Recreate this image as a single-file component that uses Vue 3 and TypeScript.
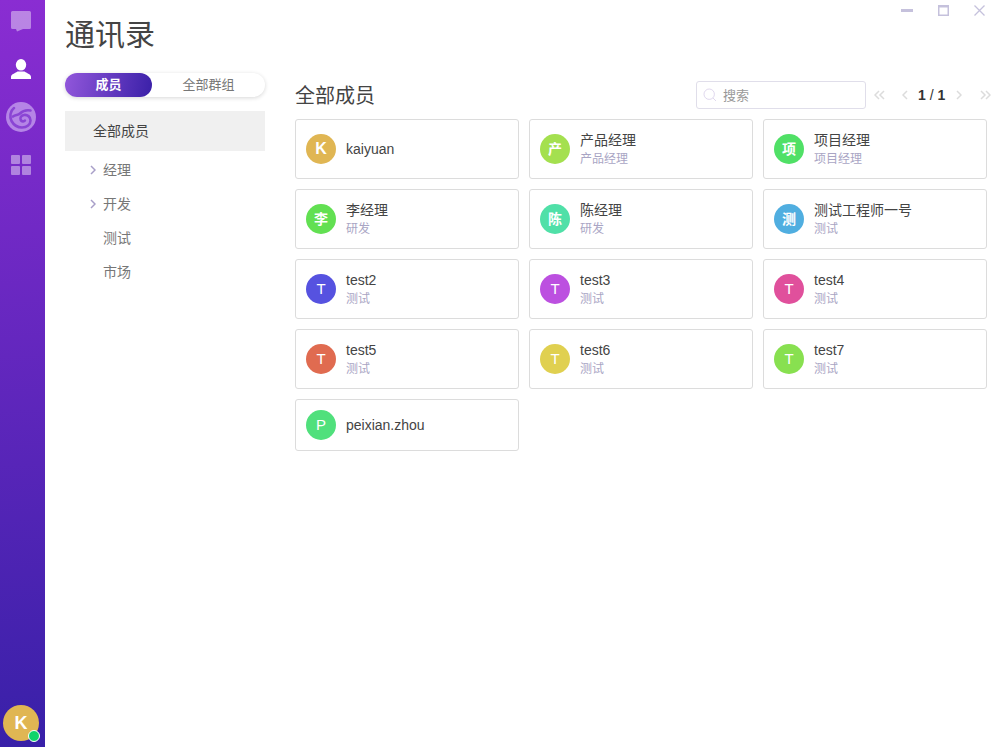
<script setup lang="ts">
interface Member { name: string; sub?: string; letter: string; color: string; strong?: boolean; big?: boolean }
const members: Member[] = [
  { name: 'kaiyuan', letter: 'K', color: '#e0b653', big: true },
  { name: '产品经理', sub: '产品经理', letter: '产', color: '#a4e04f', strong: true },
  { name: '项目经理', sub: '项目经理', letter: '项', color: '#50e066', strong: true },
  { name: '李经理', sub: '研发', letter: '李', color: '#62e052', strong: true },
  { name: '陈经理', sub: '研发', letter: '陈', color: '#50e0a8', strong: true },
  { name: '测试工程师一号', sub: '测试', letter: '测', color: '#50aee0', strong: true },
  { name: 'test2', sub: '测试', letter: 'T', color: '#5652e0' },
  { name: 'test3', sub: '测试', letter: 'T', color: '#bc50e0' },
  { name: 'test4', sub: '测试', letter: 'T', color: '#e0509c' },
  { name: 'test5', sub: '测试', letter: 'T', color: '#e06b50' },
  { name: 'test6', sub: '测试', letter: 'T', color: '#e0d050' },
  { name: 'test7', sub: '测试', letter: 'T', color: '#88e050' },
  { name: 'peixian.zhou', letter: 'P', color: '#50e07c' },
]
const tree = [
  { label: '经理', arrow: true },
  { label: '开发', arrow: true },
  { label: '测试', arrow: false },
  { label: '市场', arrow: false },
]
</script>

<template>
  <div class="app">
    <aside class="rail">
      <svg class="ico chat" width="20" height="21" viewBox="0 0 20 21">
        <path d="M1.500 0h17A1.500 1.500 0 0 1 20 1.500v15a1.500 1.500 0 0 1-1.500 1.500H12l-6 2.500L5 18H1.500A1.500 1.500 0 0 1 0 16.500v-15A1.500 1.500 0 0 1 1.500 0z" fill="#fff" fill-opacity=".42" />
      </svg>
      <svg class="ico user" width="20" height="20" viewBox="0 0 20 20">
        <ellipse cx="10" cy="5.800" rx="5.200" ry="5.800" fill="#fff" />
        <path d="M0 20v-2c0-2.600 3.600-3.600 6.500-5.500h7c2.900 1.900 6.500 2.900 6.500 5.500v2z" fill="#fff" />
      </svg>
      <svg class="ico logo" width="30" height="30" viewBox="0 0 30 30">
        <circle cx="15" cy="15" r="15" fill="#b585e6" />
        <path d="M8 6C4 9 3.500 15 5.500 19c2.500 4.500 6.500 6.500 10.500 6.500 5 0 8.500-3 8.500-7 0-3.800-3.200-6-6.500-5.500-3 .4-4.300 3-3.300 5 1 1.800 3.300 1.800 4.200.5" fill="none" stroke="#8a45d4" stroke-width="2.600" stroke-linecap="round" />
        <path d="M7 14.500c2.500-2 5-1 7-3 2.200-2.200 4.500-4 10.500-3" fill="none" stroke="#8a45d4" stroke-width="2.600" stroke-linecap="round" />
      </svg>
      <div class="apps"><i></i><i></i><i></i><i></i></div>
      <div class="spacer"></div>
      <div class="me">K<span class="dot"></span></div>
    </aside>

    <main class="main">
      <h1 class="title">通讯录</h1>
      <div class="cols">
        <section class="left">
          <div class="tabs">
            <div class="tab on">成员</div>
            <div class="tab">全部群组</div>
          </div>
          <div class="all">全部成员</div>
          <ul class="tree">
            <li v-for="t in tree" :key="t.label">
              <svg v-if="t.arrow" class="arrow" width="6" height="10" viewBox="0 0 6 10">
                <path d="M1 1l4 4-4 4" fill="none" stroke="#a89fc8" stroke-width="1.500" />
              </svg>
              <span>{{ t.label }}</span>
            </li>
          </ul>
        </section>

        <section class="right">
          <div class="head">
            <h2>全部成员</h2>
            <div class="search">
              <svg width="14" height="14" viewBox="0 0 14 14">
                <circle cx="6.200" cy="6.200" r="5.200" fill="none" stroke="#e0d8ee" stroke-width="1" />
                <path d="M10 10l3 3" stroke="#e0d8ee" stroke-width="1" />
              </svg>
              <span class="ph">搜索</span>
            </div>
            <div class="pager">
              <svg class="p1" width="11" height="10" viewBox="0 0 11 10"><path d="M5 1L1 5l4 4M10 1L6 5l4 4" fill="none" stroke="#dcdcdc" stroke-width="1.500" /></svg>
              <svg class="p2" width="6" height="10" viewBox="0 0 6 10"><path d="M5 1L1 5l4 4" fill="none" stroke="#dcdcdc" stroke-width="1.500" /></svg>
              <span class="num"><b>1</b> / <b>1</b></span>
              <svg class="p3" width="6" height="10" viewBox="0 0 6 10"><path d="M1 1l4 4-4 4" fill="none" stroke="#dcdcdc" stroke-width="1.500" /></svg>
              <svg class="p4" width="11" height="10" viewBox="0 0 11 10"><path d="M1 1l4 4-4 4M6 1l4 4-4 4" fill="none" stroke="#dcdcdc" stroke-width="1.500" /></svg>
            </div>
          </div>
          <div class="grid">
            <div v-for="m in members" :key="m.name" class="card" :class="{ short: m.name === 'peixian.zhou' }">
              <div class="avatar" :class="{ strong: m.strong, big: m.big }" :style="{ background: m.color }">{{ m.letter }}</div>
              <div class="info">
                <div class="name">{{ m.name }}</div>
                <div v-if="m.sub" class="sub">{{ m.sub }}</div>
              </div>
            </div>
          </div>
        </section>
      </div>
    </main>

    <div class="win">
      <svg width="12" height="3" viewBox="0 0 12 3"><rect width="12" height="3" fill="#c5c1dc" /></svg>
      <svg width="11" height="11" viewBox="0 0 11 11"><rect x=".75" y=".75" width="9.500" height="9.500" fill="none" stroke="#c5c1dc" stroke-width="1.500" /><rect width="11" height="2.500" fill="#c5c1dc" /></svg>
      <svg width="11" height="11" viewBox="0 0 11 11"><path d="M.5.5l10 10M10.500.5l-10 10" stroke="#c5c1dc" stroke-width="1.300" /></svg>
    </div>
  </div>
</template>

<style>
html, body { margin: 0; background: #fff; }
</style>

<style scoped>
.app {
  position: relative;
  display: flex;
  width: 996px;
  height: 747px;
  overflow: hidden;
  font-family: "Liberation Sans", "Noto Sans CJK SC", sans-serif;
  color: #333;
}
.win {
  position: absolute;
  top: 5px;
  right: 11px;
  display: flex;
  align-items: center;
  gap: 25px;
}
.rail {
  width: 45px;
  flex: none;
  box-sizing: border-box;
  padding-right: 3px;
  display: flex;
  flex-direction: column;
  align-items: center;
  background: linear-gradient(176deg, #8a2dd2 0%, #3820a8 100%);
}
.ico { display: block; flex: none; }
.chat { margin-top: 11px; }
.user { margin-top: 27px; }
.logo { margin-top: 23px; }
.apps {
  margin-top: 23px;
  display: grid;
  grid-template-columns: 9px 9px;
  grid-auto-rows: 9px;
  gap: 2px;
}
.apps i { display: block; background: #fff; opacity: .42; border-radius: 1px; }
.spacer { flex: 1; }
.me {
  position: relative;
  width: 36px;
  height: 36px;
  margin-bottom: 6px;
  border-radius: 50%;
  background: #e0b653;
  color: #fff;
  font-size: 18px;
  font-weight: 700;
  line-height: 36px;
  text-align: center;
}
.dot {
  position: absolute;
  right: -1px;
  bottom: -1px;
  box-sizing: border-box;
  width: 12px;
  height: 12px;
  border-radius: 50%;
  background: #0fd46a;
  border: 1px solid #fff;
}
.main { flex: 1; padding: 0 9px 0 20px; min-width: 0; }
.title {
  margin: 0;
  height: 73px;
  font-size: 30px;
  font-weight: 400;
  line-height: 70px;
  color: #444;
}
.cols { display: flex; gap: 30px; }
.left { width: 200px; flex: none; }
.tabs {
  display: flex;
  height: 24px;
  border-radius: 12px;
  background: #fff;
  box-shadow: 0 1px 4px rgba(0, 0, 0, .16);
  font-size: 13px;
  line-height: 24px;
  text-align: center;
  color: #777;
}
.tab { flex: 1; }
.tab.on {
  flex: none;
  width: 87px;
  border-radius: 12px;
  color: #fff;
  font-weight: 700;
  background: linear-gradient(100deg, #9257db 0%, #3a20a8 100%);
}
.all {
  margin-top: 14px;
  height: 40px;
  padding-left: 28px;
  background: #f0f0f0;
  font-size: 14px;
  line-height: 40px;
  color: #444;
}
.tree { list-style: none; margin: 2px 0 0; padding: 0; }
.tree li {
  position: relative;
  height: 34px;
  padding-left: 38px;
  font-size: 14px;
  line-height: 34px;
  color: #777;
}
.arrow { position: absolute; left: 25px; top: 12px; }
.right { flex: 1; min-width: 0; }
.head { display: flex; align-items: center; height: 46px; }
.head h2 { margin: 0 0 4px; flex: 1; font-size: 20px; font-weight: 400; color: #444; }
.search {
  box-sizing: border-box;
  display: flex;
  align-items: center;
  gap: 6px;
  width: 170px;
  height: 28px;
  margin-bottom: 2px;
  padding-left: 6px;
  border: 1px solid #e0deea;
  border-radius: 3px;
  font-size: 13px;
  color: #999;
}
.ph { position: relative; top: -1px; }
.pager {
  width: 121px;
  margin-bottom: 3px;
  display: flex;
  align-items: center;
  box-sizing: border-box;
  padding-left: 8px;
}
.p1, .p2, .p3, .p4 { flex: none; }
.p2 { margin-left: 17px; }
.num { margin-left: 10px; font-size: 14px; color: #333; white-space: nowrap; }
.num b { font-weight: 700; }
.p3 { margin-left: 11px; }
.p4 { margin-left: 18px; }
.grid {
  display: grid;
  grid-template-columns: repeat(3, 224px);
  gap: 10px;
  align-items: start;
}
.card {
  box-sizing: border-box;
  display: flex;
  align-items: center;
  gap: 10px;
  height: 60px;
  padding-left: 10px;
  border: 1px solid #dcdcdc;
  border-radius: 3px;
}
.card.short { height: 52px; }
.avatar {
  width: 30px;
  height: 30px;
  flex: none;
  border-radius: 50%;
  color: #fff;
  font-size: 15px;
  line-height: 30px;
  text-align: center;
}
.avatar.strong { font-weight: 700; font-size: 14px; }
.avatar.big { font-size: 16px; font-weight: 700; }
.name { font-size: 14px; line-height: 18px; color: #444; }
.sub { font-size: 12px; line-height: 18px; margin-top: 1px; margin-bottom: -1px; color: #a9a5c4; }
</style>
